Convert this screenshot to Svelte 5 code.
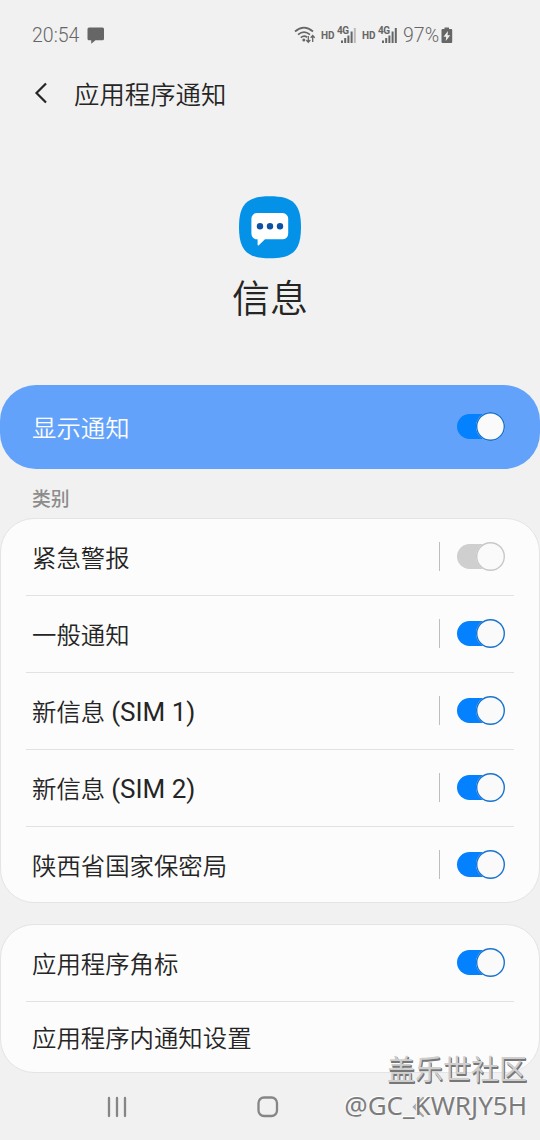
<script lang="ts">
	interface Item {
		label: string;
		/** Latin suffix, set slightly larger than the label. */
		suffix?: string;
		on?: boolean;
		divided?: boolean;
	}

	let showNotifications = $state(true);

	let categories = $state<Item[]>([
		{ label: '紧急警报', on: false, divided: true },
		{ label: '一般通知', on: true, divided: true },
		{ label: '新信息', suffix: '(SIM 1)', on: true, divided: true },
		{ label: '新信息', suffix: '(SIM 2)', on: true, divided: true },
		{ label: '陕西省国家保密局', on: true, divided: true }
	]);

	let settings = $state<Item[]>([
		{ label: '应用程序角标', on: true },
		{ label: '应用程序内通知设置' }
	]);
</script>

{#snippet toggle(on: boolean, label: string, onclick: () => void)}
	<button class="toggle" class:on role="switch" aria-checked={on} aria-label={label} {onclick}>
		<span class="track"></span>
		<span class="thumb"></span>
	</button>
{/snippet}

{#snippet signal(faded: boolean)}
	<svg class="signal" width="20" height="18" viewBox="0 0 20 18" aria-hidden="true">
		<text x="0" y="8.2" textLength="12">4G</text>
		<path d="M5 14.5v2.5M8.2 12v5M11.4 9.5v7.5M14.6 5.5v11.5" />
		<path class:faded d="M17.8 2v15" />
	</svg>
{/snippet}

{#snippet card(items: Item[])}
	<section class="card">
		{#each items as item (item.label + (item.suffix ?? ''))}
			<div class="row">
				<span class="label">
					{item.label}
					{#if item.suffix}<span class="suffix">{item.suffix}</span>{/if}
				</span>
				{#if item.divided}
					<span class="divider"></span>
				{/if}
				{#if item.on !== undefined}
					{@render toggle(item.on, item.label, () => (item.on = !item.on))}
				{/if}
			</div>
		{/each}
	</section>
{/snippet}

<div class="screen">
	<div class="status">
		<span class="time">20:54</span>
		<svg class="bubble" width="18" height="17" viewBox="0 0 18 17" aria-hidden="true">
			<path d="M2 0.5h13.5a1.5 1.5 0 0 1 1.5 1.5v9.8a1.5 1.5 0 0 1-1.5 1.5H8.5L4.2 16.8V13.3H2A1.5 1.5 0 0 1 .5 11.8V2A1.5 1.5 0 0 1 2 .5z" />
		</svg>
		<svg class="wifi" width="22" height="18" viewBox="0 0 22 18" aria-hidden="true">
			<path d="M1 5.500Q10 -2.200 19 5.500M4 8.700Q10 3.600 16 8.700M6.800 11.600Q10 9 13 11.200" />
			<circle cx="9.8" cy="14" r="1.5" />
			<path class="arrows" d="M14.300 10v6M12.300 14l2 2.200 2-2.200M18.700 16v-6M16.700 11.700l2-2.200 2 2.200" />
		</svg>
		<span class="hd">HD</span>
		{@render signal(true)}
		<span class="hd">HD</span>
		{@render signal(false)}
		<span class="percent">97%</span>
		<svg class="battery" width="12" height="17" viewBox="0 0 12 17" aria-hidden="true">
			<path d="M3.500 0.500h4.500v1.500h2.200q1 0 1 1v12q0 1-1 1H1.500q-1 0-1-1V3q0-1 1-1h2z" />
			<path class="bolt" d="M7 4L2.500 9.800h2.700L4.700 14l4.500-5.800H6.500z" />
		</svg>
	</div>

	<header>
		<svg width="14" height="22" viewBox="0 0 14 22" aria-hidden="true">
			<path d="M12 1.5L2.500 11l9.500 9.500" />
		</svg>
		<h1>应用程序通知</h1>
	</header>

	<div class="app">
		<svg width="64" height="64" viewBox="0 0 64 64" aria-hidden="true">
			<path class="tile" d="M32 1.300C55 1.300 63 9 63 32.300S55 63.300 32 63.300 1 55.500 1 32.300 9 1.300 32 1.300z" />
			<path class="talk" d="M19 18h25.600a5.600 5.600 0 0 1 5.600 5.600v15.100a5.600 5.600 0 0 1-5.600 5.600H27l-6.200 6c-.6.500-1.200.2-1.200-.5V44.300h-.6a5.600 5.600 0 0 1-5.600-5.600V23.600a5.600 5.600 0 0 1 5.600-5.600z" />
			<circle cx="22" cy="31.300" r="3.200" />
			<circle cx="32" cy="31.300" r="3.200" />
			<circle cx="42" cy="31.300" r="3.200" />
		</svg>
		<h2>信息</h2>
	</div>

	<div class="master">
		<span class="label">显示通知</span>
		{@render toggle(showNotifications, '显示通知', () => (showNotifications = !showNotifications))}
	</div>

	<h3>类别</h3>
	{@render card(categories)}
	{@render card(settings)}

	<nav>
		<svg width="22" height="22" viewBox="0 0 22 22" aria-hidden="true">
			<path d="M3 2v18M11 2v18M19 2v18" />
		</svg>
		<svg width="22" height="22" viewBox="0 0 22 22" aria-hidden="true">
			<rect x="1.5" y="1.5" width="18.5" height="18.5" rx="5.5" />
		</svg>
		<svg class="back" width="22" height="22" viewBox="0 0 22 22" aria-hidden="true">
			<path d="M14 2L5 11l9 9" />
		</svg>
	</nav>

	<div class="watermark">
		<span class="community">盖乐世社区</span>
		<span class="user">@GC_KWRJY5H</span>
	</div>
</div>

<style>
	:global(body) {
		background: #f1f1f1;
	}

	.screen {
		position: relative;
		box-sizing: border-box;
		width: 540px;
		height: 1140px;
		overflow: hidden;
		background: #f1f1f1;
		color: #252525;
		font-family: Roboto, 'Noto Sans CJK SC DemiLight', 'Noto Sans CJK SC', sans-serif;
		font-weight: 350;
	}

	svg {
		display: block;
		flex: none;
	}

	h1,
	h2,
	h3 {
		margin: 0;
		font-weight: 350;
	}

	.status {
		display: flex;
		align-items: center;
		box-sizing: border-box;
		height: 70px;
		padding-left: 32px;
		color: #666;
		fill: #666;
	}

	.time {
		width: 48px;
		font-size: 19.5px;
	}

	.bubble {
		margin-left: 7px;
	}

	.wifi {
		margin-left: 189px;
	}

	.wifi path {
		fill: none;
		stroke: #666;
		stroke-width: 1.7;
	}

	.wifi .arrows {
		stroke-width: 1.3;
	}

	.hd {
		width: 15px;
		margin-left: 5px;
		font-size: 10px;
		font-weight: 700;
	}

	.signal {
		margin-left: 1px;
	}

	.signal text {
		font-size: 10px;
		font-weight: 700;
	}

	.signal path {
		stroke: #666;
		stroke-width: 2;
	}

	.signal .faded {
		stroke: #bbb;
	}

	.percent {
		width: 38px;
		margin-left: 5px;
		font-size: 19.5px;
	}

	.battery .bolt {
		fill: #f1f1f1;
	}

	header {
		display: flex;
		align-items: center;
		box-sizing: border-box;
		height: 48px;
		padding: 0 0 2px 34px;
	}

	header path {
		fill: none;
		stroke: #252525;
		stroke-width: 2.2;
	}

	h1 {
		margin-left: 26px;
		padding-bottom: 1px;
		font-size: 25.4px;
	}

	.app {
		display: flex;
		flex-direction: column;
		align-items: center;
		box-sizing: border-box;
		height: 267px;
		padding-top: 77px;
	}

	.tile {
		fill: #0392e8;
	}

	.talk {
		fill: #fff;
	}

	.app circle {
		fill: #0c51a5;
	}

	h2 {
		margin-top: 12px;
		font-size: 38px;
		line-height: 56px;
	}

	.master {
		display: flex;
		align-items: center;
		justify-content: space-between;
		box-sizing: border-box;
		height: 84px;
		padding: 0 35px 0 32px;
		border-radius: 36px;
		background: #62a2fb;
		color: #fcfcfc;
	}

	.label {
		padding-top: 3px;
		font-size: 24.4px;
		line-height: 36px;
	}

	.suffix {
		font-size: 26px;
		font-weight: 380;
		line-height: 1;
	}

	h3 {
		height: 49px;
		padding-left: 32px;
		color: #8c8c8c;
		font-family: Roboto, 'Noto Sans CJK SC', sans-serif;
		font-size: 18.8px;
		font-weight: 500;
		line-height: 62px;
	}

	.card {
		box-sizing: border-box;
		margin-bottom: 21px;
		border: 1px solid #e4e4e4;
		border-radius: 34px;
		background: #fcfcfc;
	}

	.row {
		display: flex;
		align-items: center;
		box-sizing: border-box;
		height: 77px;
		margin: 0 25px;
		padding: 0 9px 0 6px;
		border-bottom: 1px solid #e2e2e2;
	}

	.row:last-child {
		height: 76px;
		margin-bottom: -1px;
		border-bottom: 0;
	}

	.card:last-of-type .row:last-child {
		height: 70px;
		margin-bottom: 0;
	}

	.row .label {
		flex: 1;
	}

	.divider {
		width: 1px;
		height: 29px;
		margin: 0 17px 1px 0;
		background: #bdbdbd;
	}

	.toggle {
		display: grid;
		align-items: center;
		flex: none;
		width: 48px;
		height: 29px;
		padding: 0;
		margin-bottom: 1px;
		border: 0;
		background: none;
	}

	.track,
	.thumb {
		grid-area: 1 / 1;
		box-sizing: border-box;
	}

	.track {
		width: 44px;
		height: 25px;
		border-radius: 13px;
		background: #cfcfcf;
	}

	.thumb {
		justify-self: end;
		width: 29px;
		height: 29px;
		border-radius: 50%;
		background: #fafafa;
		box-shadow: inset 0 0 0 1.4px #c8c8c8;
	}

	.on .track {
		background: #0381fe;
	}

	.on .thumb {
		box-shadow: inset 0 0 0 1.4px #1a73cf;
	}

	nav {
		display: flex;
		gap: 129px;
		padding: 2px 0 0 106px;
		fill: none;
		stroke: #868686;
		stroke-width: 2.3;
		stroke-linecap: round;
	}

	.back {
		margin-left: 1px;
		stroke: #a8a8a8;
	}

	.watermark {
		position: absolute;
		right: 13px;
		bottom: 16px;
		display: flex;
		flex-direction: column;
		align-items: flex-end;
		font-family: 'Noto Sans', 'Noto Sans CJK SC', sans-serif;
		font-weight: 400;
	}

	.community {
		color: #cecece;
		font-size: 28px;
		line-height: 36px;
		text-shadow:
			1px 1px 0 #777,
			1px 2px 0 #777;
	}

	.user {
		color: #7c7c7c;
		font-size: 26px;
		line-height: 37px;
		text-shadow: -1px -1px 0 #fff;
	}
</style>
